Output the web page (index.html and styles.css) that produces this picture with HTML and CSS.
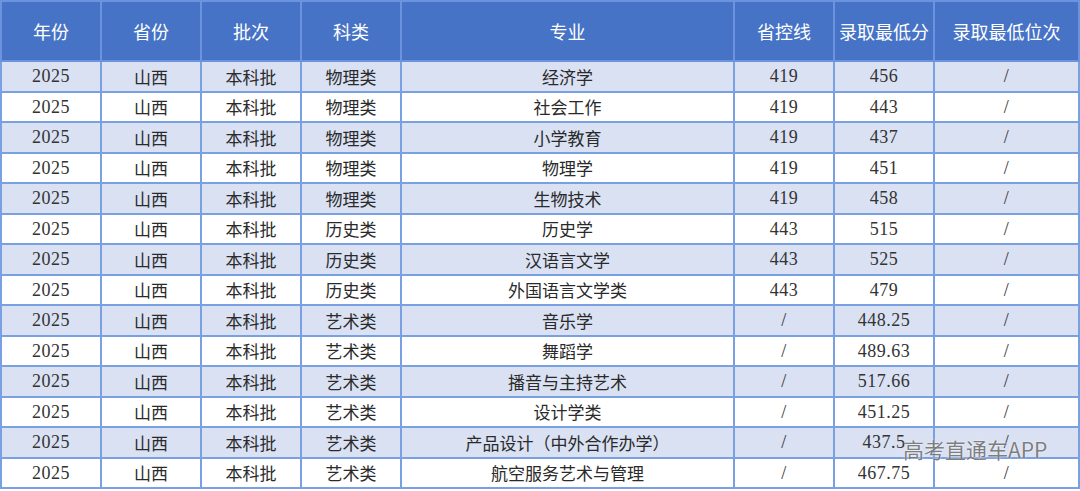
FILE: index.html
```html
<!DOCTYPE html>
<html lang="zh-CN">
<head>
<meta charset="utf-8">
<title>录取分数</title>
<link rel="stylesheet" href="styles.css">
</head>
<body>
<div class="wrap">
<table class="score">
<colgroup>
<col class="c-year"><col class="c-prov"><col class="c-batch"><col class="c-type"><col class="c-major"><col class="c-line"><col class="c-min"><col class="c-rank">
</colgroup>
<thead>
<tr><th>年份</th><th>省份</th><th>批次</th><th>科类</th><th>专业</th><th>省控线</th><th>录取最低分</th><th>录取最低位次</th></tr>
</thead>
<tbody>
<tr class="alt"><td class="num">2025</td><td>山西</td><td>本科批</td><td>物理类</td><td>经济学</td><td class="num">419</td><td class="num">456</td><td class="num">/</td></tr>
<tr><td class="num">2025</td><td>山西</td><td>本科批</td><td>物理类</td><td>社会工作</td><td class="num">419</td><td class="num">443</td><td class="num">/</td></tr>
<tr class="alt"><td class="num">2025</td><td>山西</td><td>本科批</td><td>物理类</td><td>小学教育</td><td class="num">419</td><td class="num">437</td><td class="num">/</td></tr>
<tr><td class="num">2025</td><td>山西</td><td>本科批</td><td>物理类</td><td>物理学</td><td class="num">419</td><td class="num">451</td><td class="num">/</td></tr>
<tr class="alt"><td class="num">2025</td><td>山西</td><td>本科批</td><td>物理类</td><td>生物技术</td><td class="num">419</td><td class="num">458</td><td class="num">/</td></tr>
<tr><td class="num">2025</td><td>山西</td><td>本科批</td><td>历史类</td><td>历史学</td><td class="num">443</td><td class="num">515</td><td class="num">/</td></tr>
<tr class="alt"><td class="num">2025</td><td>山西</td><td>本科批</td><td>历史类</td><td>汉语言文学</td><td class="num">443</td><td class="num">525</td><td class="num">/</td></tr>
<tr><td class="num">2025</td><td>山西</td><td>本科批</td><td>历史类</td><td>外国语言文学类</td><td class="num">443</td><td class="num">479</td><td class="num">/</td></tr>
<tr class="alt"><td class="num">2025</td><td>山西</td><td>本科批</td><td>艺术类</td><td>音乐学</td><td class="num">/</td><td class="num">448.25</td><td class="num">/</td></tr>
<tr><td class="num">2025</td><td>山西</td><td>本科批</td><td>艺术类</td><td>舞蹈学</td><td class="num">/</td><td class="num">489.63</td><td class="num">/</td></tr>
<tr class="alt"><td class="num">2025</td><td>山西</td><td>本科批</td><td>艺术类</td><td>播音与主持艺术</td><td class="num">/</td><td class="num">517.66</td><td class="num">/</td></tr>
<tr><td class="num">2025</td><td>山西</td><td>本科批</td><td>艺术类</td><td>设计学类</td><td class="num">/</td><td class="num">451.25</td><td class="num">/</td></tr>
<tr class="alt"><td class="num">2025</td><td>山西</td><td>本科批</td><td>艺术类</td><td>产品设计（中外合作办学）</td><td class="num">/</td><td class="num">437.5</td><td class="num">/</td></tr>
<tr><td class="num">2025</td><td>山西</td><td>本科批</td><td>艺术类</td><td>航空服务艺术与管理</td><td class="num">/</td><td class="num">467.75</td><td class="num">/</td></tr>
</tbody>
</table>
<div class="watermark">高考直通车APP</div>
</div>
</body>
</html>
```

FILE: styles.css
```css
html, body {
  margin: 0;
  padding: 0;
  background: #ffffff;
}

.wrap {
  position: relative;
  width: 1080px;
  height: 491px;
  padding: 0;
  box-sizing: border-box;
}

.score {
  width: 1078px;
  height: 489px;
  border-collapse: collapse;
  table-layout: fixed;
  font-family: "Noto Sans CJK SC", sans-serif;
}

.c-year, .c-prov, .c-batch, .c-type, .c-line, .c-min { width: 100px; }
.c-major { width: 333px; }
.c-rank { width: 145px; }

.score th {
  height: 58px;
  background: #4673c6;
  color: #ffffff;
  font-weight: 400;
  font-size: 18px;
  border: 2px solid #6c93de;
  text-align: center;
  padding: 0;
}

.score td {
  height: 28px;
  border: 2px solid #7aa0e4;
  text-align: center;
  padding: 0;
  font-size: 17px;
  color: #2a2a2a;
  line-height: 1;
}

.score td.num {
  font-family: "Liberation Serif", "Noto Sans CJK SC", serif;
  font-size: 18px;
  letter-spacing: 0.5px;
  color: #333333;
}

.score tr.alt td {
  background: #d9e1f3;
}

.watermark {
  position: absolute;
  left: 903px;
  top: 436px;
  font-family: "Noto Sans CJK SC", sans-serif;
  font-size: 21px;
  line-height: 26px;
  color: rgba(105, 105, 105, 0.85);
  text-shadow: 0 0 2px rgba(255, 255, 255, 0.9);
  white-space: nowrap;
}
```
